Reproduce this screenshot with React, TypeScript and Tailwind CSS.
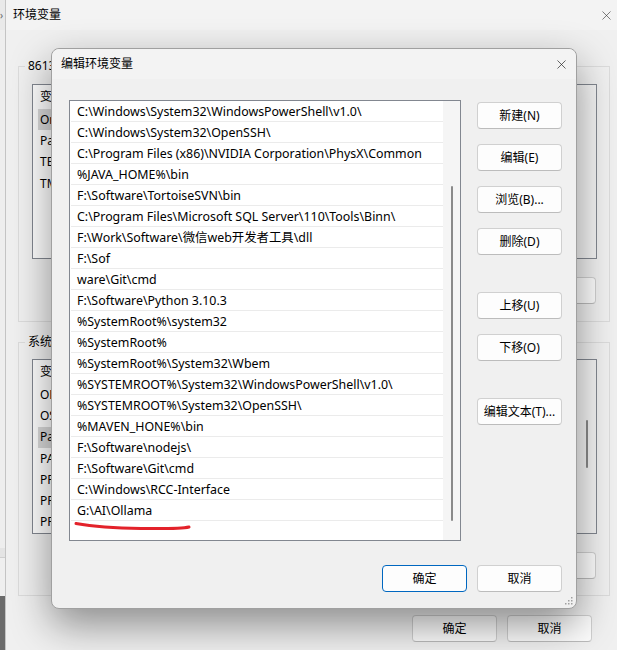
import { X } from "lucide-react";

// Two stacked Windows 11 dialogs: the classic "环境变量" window behind,
// the "编辑环境变量" editor floating over it with its path list.
const paths = [
  "C:\\Windows\\System32\\WindowsPowerShell\\v1.0\\",
  "C:\\Windows\\System32\\OpenSSH\\",
  "C:\\Program Files (x86)\\NVIDIA Corporation\\PhysX\\Common",
  "%JAVA_HOME%\\bin",
  "F:\\Software\\TortoiseSVN\\bin",
  "C:\\Program Files\\Microsoft SQL Server\\110\\Tools\\Binn\\",
  "F:\\Work\\Software\\微信web开发者工具\\dll",
  "F:\\Sof",
  "ware\\Git\\cmd",
  "F:\\Software\\Python 3.10.3",
  "%SystemRoot%\\system32",
  "%SystemRoot%",
  "%SystemRoot%\\System32\\Wbem",
  "%SYSTEMROOT%\\System32\\WindowsPowerShell\\v1.0\\",
  "%SYSTEMROOT%\\System32\\OpenSSH\\",
  "%MAVEN_HONE%\\bin",
  "F:\\Software\\nodejs\\",
  "F:\\Software\\Git\\cmd",
  "C:\\Windows\\RCC-Interface",
  "G:\\AI\\Ollama",
];

const userVars = ["OneDrive", "Path", "TEMP", "TMP"];
const sysVars = [
  "OLLAMA_MODELS",
  "OS",
  "Path",
  "PATHEXT",
  "PROCESSOR_ARCHITECTURE",
  "PROCESSOR_IDENTIFIER",
  "PROCESSOR_LEVEL",
];

function Btn({
  label,
  primary = false,
  className = "",
}: {
  label: string;
  primary?: boolean;
  className?: string;
}) {
  return (
    <button
      className={`flex h-[27px] w-[85px] items-center justify-center rounded-[4px] border bg-[#fdfdfd] text-[12px] text-black ${
        primary ? "border-[#0067c0]" : "border-[#d0d0d0] border-b-[#bcbcbc]"
      } ${className}`}
    >
      {label}
    </button>
  );
}

function VarList({ rows, selected }: { rows: string[]; selected: number }) {
  return (
    <div className="flex h-[175px] border border-[#828790] bg-white">
      <div className="flex-1">
        <div className="flex h-[24px] items-center pl-[7px]">变量</div>
        {rows.map((r, i) => (
          <div
            key={r + i}
            className={`ml-[5px] flex h-[21.3px] items-center pl-[2px] ${
              i === selected ? "bg-[#d9d9d9]" : ""
            }`}
          >
            {r}
          </div>
        ))}
      </div>
      <div className="flex w-[19px] justify-center bg-[#f4f4f4] pt-[60px]">
        {selected > 1 && <div className="h-[48px] w-[2px] rounded-full bg-[#8a8a8a]" />}
      </div>
    </div>
  );
}

function Group({
  label,
  rows,
  selected,
  className = "",
}: {
  label: string;
  rows: string[];
  selected: number;
  className?: string;
}) {
  return (
    <div className={`relative border border-[#dcdcdc] pl-[13px] pr-[12px] ${className}`}>
      <span className="absolute -top-[9px] left-[6px] bg-[#f0f0f0] px-[3px] leading-[16px]">
        {label}
      </span>
      <VarList rows={rows} selected={selected} />
      <div className="mt-[18px] flex justify-end gap-[10px] pr-[1px]">
        <Btn label="新建(N)..." className="h-[26px]" />
        <Btn label="编辑(E)..." className="h-[26px]" />
        <Btn label="删除(D)" className="h-[26px]" />
      </div>
    </div>
  );
}

function BackgroundWindow() {
  return (
    <div className="flex w-[617px] shrink-0 flex-col border-l border-[#c4c4c4] bg-[#f0f0f0]">
      <div className="flex h-[30px] items-center justify-between bg-[#f3f3f3] pl-[7px] pr-[8px]">
        <span>环境变量</span>
        <X size={15} strokeWidth={1} className="text-[#333]" />
      </div>
      <div className="flex flex-col px-[12px] pt-[36px]">
        <Group label="86135 的用户变量(U)" rows={userVars} selected={0} className="pt-[17px] pb-[17px]" />
        <Group label="系统变量(S)" rows={sysVars} selected={2} className="mt-[20px] pt-[16px] pb-[16px]" />
        <div className="mt-[19px] flex justify-end gap-[10px] pr-[18px]">
          <Btn label="确定" />
          <Btn label="取消" />
        </div>
      </div>
    </div>
  );
}

function EditDialog() {
  return (
    <div className="absolute left-[51px] top-[48px] flex h-[561px] w-[526px] flex-col rounded-[8px] border border-[#a0a0a0] bg-[#f0f0f0] shadow-[0_16px_40px_rgba(0,0,0,0.42)]">
      <div className="flex h-[30px] items-center justify-between rounded-t-[8px] bg-[#f3f3f3] pl-[9px] pr-[7px]">
        <span>编辑环境变量</span>
        <X size={15} strokeWidth={1.1} className="text-[#222]" />
      </div>
      <div className="flex flex-1 flex-col pl-[17px] pr-[14px] pt-[21px] pb-[16px]">
        <div className="flex">
          <div className="flex h-[441px] w-[392px] border border-[#828790] bg-white">
            <ul className="flex-1 pl-[1px] text-[12.4px]">
              {paths.map((p, i) => (
                <li
                  key={i}
                  className="flex h-[21px] items-center whitespace-nowrap border-b border-[#ebebeb] pl-[6px] pt-[3px]"
                >
                  {p}
                </li>
              ))}
            </ul>
            <div className="flex w-[17px] justify-center bg-[#f5f5f5] pt-[85px] pl-[1px]">
              <div className="h-[335px] w-[2px] rounded-full bg-[#8a8a8a]" />
            </div>
          </div>
          <div className="ml-[16px] flex flex-col pt-[2px]">
            <Btn label="新建(N)" />
            <Btn label="编辑(E)" className="mt-[15px]" />
            <Btn label="浏览(B)..." className="mt-[15px]" />
            <Btn label="删除(D)" className="mt-[15px]" />
            <Btn label="上移(U)" className="mt-[37px]" />
            <Btn label="下移(O)" className="mt-[15px]" />
            <Btn label="编辑文本(T)..." className="mt-[37px]" />
          </div>
        </div>
        <div className="mt-auto flex justify-end gap-[10px]">
          <Btn label="确定" primary />
          <Btn label="取消" />
        </div>
      </div>

      {/* red hand-drawn underline under the new entry */}
      <svg className="pointer-events-none absolute left-0 top-0" width="526" height="561">
        <path
          d="M24 474.5 Q 49 479 89 479.5 T 137 478"
          fill="none"
          stroke="#e3222a"
          strokeWidth="3"
          strokeLinecap="round"
        />
      </svg>

      {/* resize grip */}
      <svg className="absolute bottom-[3px] right-[3px]" width="9" height="9">
        {[
          [7, 1],
          [4, 4],
          [7, 4],
          [1, 7],
          [4, 7],
          [7, 7],
        ].map(([x, y]) => (
          <rect key={`${x}-${y}`} x={x} y={y} width="1.5" height="1.5" fill="#a0a0a0" />
        ))}
      </svg>
    </div>
  );
}

export default function App() {
  return (
    <div className="relative flex h-[650px] w-[617px] overflow-hidden bg-[#e9e9e9] font-['Noto_Sans','Noto_Sans_CJK_SC',sans-serif] text-[12px] text-black">
      <div className="flex w-[5px] shrink-0 flex-col">
        <div className="flex h-[30px] items-center text-[10px] text-[#666]">›</div>
        <div className="h-[518px] bg-[#eeeeee]" />
        <div className="h-[10px] border-b border-[#cfcfcf] bg-[#e4e4e4]" />
        <div className="h-[38px] bg-[#efefef]" />
        <div className="flex-1 bg-[#6b6b6b]" />
      </div>
      <BackgroundWindow />
      <EditDialog />
    </div>
  );
}
